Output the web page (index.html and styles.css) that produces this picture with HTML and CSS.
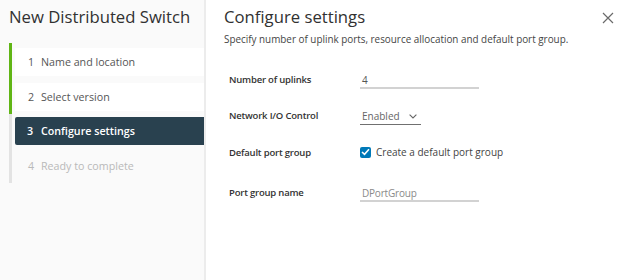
FILE: index.html
```html
<!DOCTYPE html>
<html>
<head>
<meta charset="utf-8">
<link rel="stylesheet" href="styles.css">
</head>
<body>
<div class="wizard">
  <aside class="sidebar">
    <h1 class="wiz-title">New Distributed Switch</h1>
    <ol class="steps">
      <li class="step done"><div class="step-box"><span class="num">1</span><span class="label">Name and location</span></div></li>
      <li class="step done"><div class="step-box"><span class="num">2</span><span class="label">Select version</span></div></li>
      <li class="step current"><div class="step-box"><span class="num">3</span><span class="label">Configure settings</span></div></li>
      <li class="step todo"><div class="step-box"><span class="num">4</span><span class="label">Ready to complete</span></div></li>
    </ol>
  </aside>
  <main class="content">
    <header class="content-head">
      <h2 class="page-title">Configure settings</h2>
      <button class="close" aria-label="Close">
        <svg width="12" height="12" viewBox="0 0 12 12"><path d="M1 1 L11 11 M11 1 L1 11" stroke="#6a6a6a" stroke-width="1.2" fill="none"/></svg>
      </button>
    </header>
    <p class="subtitle">Specify number of uplink ports, resource allocation and default port group.</p>
    <div class="form">
      <div class="row">
        <div class="lbl">Number of uplinks</div>
        <div class="field input wide">4</div>
      </div>
      <div class="row">
        <div class="lbl">Network I/O Control</div>
        <div class="field select">Enabled
          <svg class="chev" width="8" height="5" viewBox="0 0 8 5"><path d="M0.6 0.6 L4 4 L7.4 0.6" stroke="#666" stroke-width="1.1" fill="none"/></svg>
        </div>
      </div>
      <div class="row">
        <div class="lbl">Default port group</div>
        <label class="check">
          <span class="box"><svg width="9" height="8" viewBox="0 0 9 8"><path d="M1 4 L3.5 6.3 L8 1.3" stroke="#fff" stroke-width="1.6" fill="none"/></svg></span>
          <span class="check-text">Create a default port group</span>
        </label>
      </div>
      <div class="row last">
        <div class="lbl">Port group name</div>
        <div class="field input wide placeholder">DPortGroup</div>
      </div>
    </div>
  </main>
</div>
</body>
</html>
```

FILE: styles.css
```css
html, body {
  margin: 0;
  padding: 0;
  background: #ffffff;
}
body {
  font-family: "Open Sans", "Liberation Sans", sans-serif;
  color: #333;
  width: 624px;
  height: 280px;
  overflow: hidden;
}
.wizard {
  display: flex;
  height: 280px;
}
.sidebar {
  flex: none;
  background: #fafafa;
  border-right: 2px solid #ececec;
  padding-left: 9px;
  width: 195px;
}
.wiz-title {
  margin: 0;
  padding-top: 5px;
  height: 43px;
  box-sizing: border-box;
  font-size: 16.7px;
  font-weight: 400;
  color: #313131;
  line-height: 24px;
  white-space: nowrap;
}
.steps {
  list-style: none;
  margin: 0;
  padding: 0;
}
.step {
  border-left: 3px solid #e3e3e3;
  padding: 3.25px 0 3.25px 3px;
}
.step:first-child { padding-top: 5px; }
.step:last-child { padding-bottom: 3.5px; }
.step.done { border-left-color: #60b515; }
.step-box {
  height: 28px;
  display: flex;
  align-items: center;
  padding-left: 13px;
  background: #ffffff;
  font-size: 10.7px;
  color: #565656;
}
.num { width: 13px; flex: none; }
.step.current .step-box {
  background: #29414f;
  color: #fff;
  font-weight: 600;
  padding-left: 12px;
  border-radius: 2px 0 0 2px;
}
.step.current .num { width: 14px; }
.step.todo .step-box {
  background: transparent;
  color: #b9b9b9;
}
.content {
  flex: 1;
  padding-left: 18px;
}
.content-head {
  display: flex;
  justify-content: space-between;
  align-items: flex-start;
}
.page-title {
  margin: 0;
  padding-top: 5px;
  font-size: 16.7px;
  font-weight: 400;
  color: #313131;
  line-height: 24px;
}
.close {
  border: 0;
  background: none;
  padding: 0;
  margin: 12px 10px 0 0;
  width: 12px;
  height: 12px;
  display: block;
}
.close svg { display: block; }
.subtitle {
  margin: 3px 0 0 0;
  font-size: 9.9px;
  color: #454545;
  line-height: 14px;
}
.form {
  margin-top: 15px;
  padding-left: 5px;
}
.row {
  display: flex;
  align-items: center;
  height: 36.5px;
}
.row.last { margin-top: 3.5px; }
.lbl {
  width: 131px;
  flex: none;
  font-size: 9.5px;
  font-weight: 600;
  letter-spacing: -0.2px;
  color: #333;
}
.field {
  font-size: 10px;
  color: #555;
  border-bottom: 2px solid #d2d2d2;
  height: 18px;
  line-height: 18px;
  padding-left: 2px;
  box-sizing: border-box;
  margin-top: 2px;
}
.field.wide { width: 119px; }
.field.placeholder { color: #8a8a8a; letter-spacing: -0.2px; }
.field.select {
  width: 61px;
  display: flex;
  align-items: center;
  color: #666;
  border-bottom: 1px solid #707070;
  height: 17px;
}
.chev { margin-left: 9px; }
.check {
  display: flex;
  align-items: center;
}
.box {
  width: 11px;
  height: 11px;
  border-radius: 2px;
  background: #0079b8;
  display: flex;
  align-items: center;
  justify-content: center;
  margin-right: 5px;
}
.check-text {
  font-size: 10px;
  color: #444;
}
```
